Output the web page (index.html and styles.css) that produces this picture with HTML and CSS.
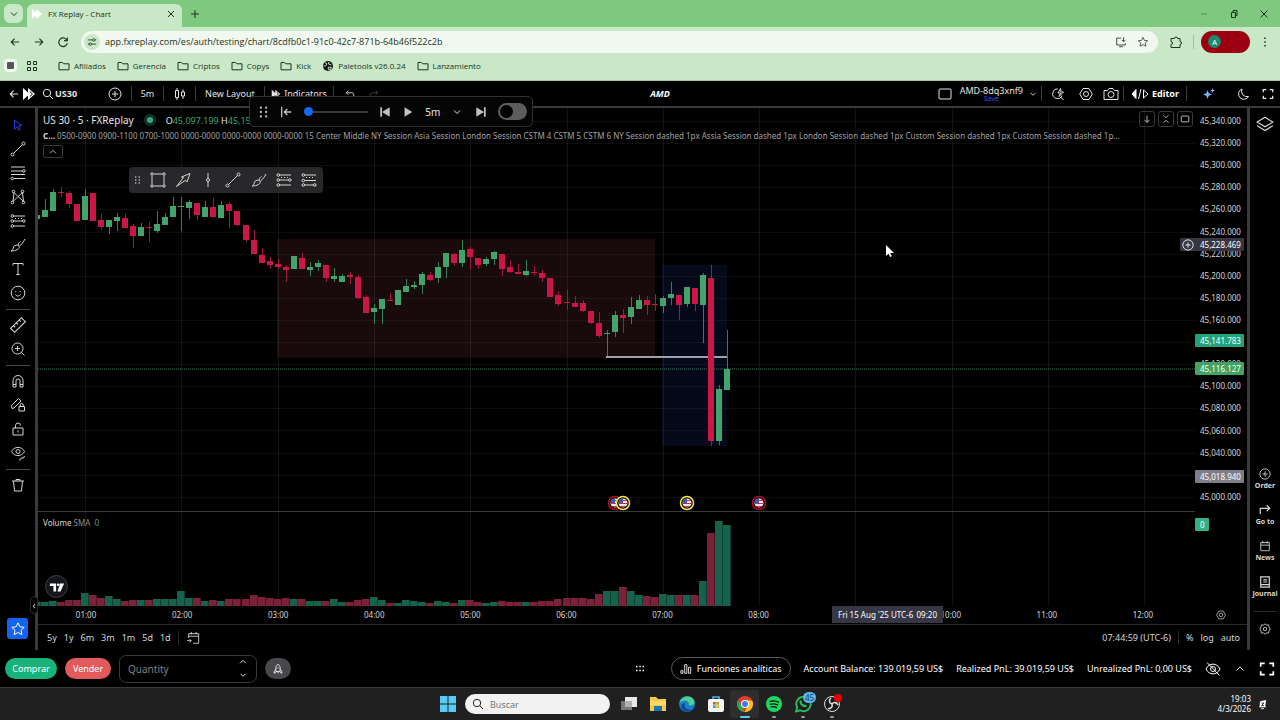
FILE: index.html
```html
<!DOCTYPE html>
<html lang="es">
  <head>
    <meta charset="UTF-8" />
    <meta name="viewport" content="width=device-width, initial-scale=1.0" />
    <title>FX Replay - Chart</title>
    <link rel="stylesheet" href="styles.css">
  </head>
  <body>
    <!--Icons-->
    <svg class="sprite" aria-hidden="true">
      <symbol id="i-down" viewBox="0 0 12 12"><path d="M3 4.500l3 3 3-3" /></symbol>
      <symbol id="i-up" viewBox="0 0 12 12"><path d="M2.500 7.500l3.500-3.500 3.500 3.500" /></symbol>
      <symbol id="i-x" viewBox="0 0 12 12"><path d="M3 3l6 6M9 3l-6 6" /></symbol>
      <symbol id="i-plus" viewBox="0 0 12 12"><path d="M6 2v8M2 6h8" /></symbol>
      <symbol id="i-back" viewBox="0 0 12 12"><path d="M11 6H1.500M5.500 2l-4 4 4 4" stroke-width="1.300" /></symbol>
      <symbol id="i-fwd" viewBox="0 0 12 12"><path d="M1 6h9.500M6.500 2l4 4-4 4" stroke-width="1.300" /></symbol>
      <symbol id="i-reload" viewBox="0 0 12 12"><path d="M10 4.500A4.300 4.300 0 1 0 10.300 7M10.300 1.500v3.200H7" stroke-width="1.200" /></symbol>
      <symbol id="i-tune" viewBox="0 0 12 12"><path d="M1 3.500h5M9.500 3.500h1.500M1 8.500h1.500M6 8.500h5" /><circle cx="8" cy="3.500" r="1.500" /><circle cx="4" cy="8.500" r="1.500" /></symbol>
      <symbol id="i-folder" viewBox="0 0 12 12"><path d="M1 2.500h3.500l1.200 1.300H11v6H1z" /></symbol>
      <symbol id="i-apps" viewBox="0 0 12 12"><path d="M1.500 1.500h3v3h-3zM7.500 1.500h3v3h-3zM1.500 7.500h3v3h-3zM7.500 7.500h3v3h-3z" /></symbol>
      <symbol id="i-globe" viewBox="0 0 12 12"><circle cx="6" cy="6" r="5" fill="#111" stroke="none" /><path d="M3 2.500l2 1.500-1.500 2L1.500 6M7 2l-.5 2 3 1M6.500 7l3 .5-1.500 2.500-2-1z" stroke="#c8e8c8" /></symbol>
      <symbol id="i-install" viewBox="0 0 14 14"><path d="M7 2.500H2v8h10V8.500M5 12.500h4M10 1.500v5M7.800 4.500l2.200 2.200 2.200-2.200" /></symbol>
      <symbol id="i-star" viewBox="0 0 16 16"><path d="M8 1.800l1.900 4 4.300.5-3.200 3 .9 4.300L8 11.500l-3.900 2.100.9-4.300-3.200-3 4.300-.5z" /></symbol>
      <symbol id="i-puzzle" viewBox="0 0 14 14"><path d="M2 3.500h3.500a1.500 1.500 0 0 1 3 0H11V6.500a1.500 1.500 0 0 1 0 3V12.500H2V9.500a1.500 1.500 0 0 0 0-3z" /></symbol>
      <symbol id="i-fxr" viewBox="0 0 14 14"><path d="M1 1l5 4.500V1l7 6-7 6V8.500L1 13z" fill="currentColor" stroke="none" /><path d="M7.800 4.500L10.500 7 7.800 9.500" stroke="#000" /></symbol>
      <symbol id="i-search" viewBox="0 0 12 12"><circle cx="5" cy="5" r="3.700" /><path d="M7.800 7.800L11 11" /></symbol>
      <symbol id="i-circleplus" viewBox="0 0 14 14"><circle cx="7" cy="7" r="6" /><path d="M7 4v6M4 7h6" /></symbol>
      <symbol id="i-candles" viewBox="0 0 14 14"><path d="M2.500 3.500h3v7h-3zM4 1v2.500M4 10.500V13M8.500 5h3v4h-3zM10 2.500V5M10 9v3" /></symbol>
      <symbol id="i-undo" viewBox="0 0 12 12"><path d="M4 2L1.500 4.500 4 7M1.500 4.500H8a2.500 2.500 0 0 1 2.500 2.500v2" /></symbol>
      <symbol id="i-redo" viewBox="0 0 12 12"><path d="M8 2l2.500 2.500L8 7M10.500 4.500H4A2.500 2.500 0 0 0 1.500 7v2" /></symbol>
      <symbol id="i-box" viewBox="0 0 14 14"><rect x="1" y="2" width="12" height="10" rx="1" /></symbol>
      <symbol id="i-quick" viewBox="0 0 14 14"><path d="M7 2A4.800 4.800 0 1 0 11 8.500M9.500 10l3 3M9.500 1.500L7 6h2.500L8 9.500 12.500 5H10z" /></symbol>
      <symbol id="i-hex" viewBox="0 0 14 14"><path d="M4 1.500h6L13.300 7 10 12.500H4L.7 7z" /><circle cx="7" cy="7" r="2.500" /></symbol>
      <symbol id="i-camera" viewBox="0 0 16 14"><path d="M1 3.500h3.500L6 1.500h4l1.500 2H15v9H1z" /><circle cx="8" cy="7.500" r="3" /></symbol>
      <symbol id="i-code" viewBox="0 0 18 12"><path d="M5 1.500L1 6l4 4.500z" fill="currentColor" /><path d="M10 1L7.500 11M12.500 2L17 6l-4.500 4z" /></symbol>
      <symbol id="i-spark" viewBox="0 0 14 14"><path d="M5.500 3l1.200 3.300L10 7.500 6.700 8.700 5.500 12 4.300 8.700 1 7.500l3.300-1.200zM10.500 1l.7 1.800 1.800.7-1.800.7-.7 1.800-.7-1.800L8 3.500l1.800-.7z" fill="#7fb0ff" stroke="none" /></symbol>
      <symbol id="i-moon" viewBox="0 0 14 14"><path d="M6 2a5.300 5.300 0 1 0 6.500 7.500A5.500 5.500 0 0 1 6 2z" /></symbol>
      <symbol id="i-full" viewBox="0 0 14 14"><path d="M1.500 5V2H5M9 2h3.500v3M12.500 9v3H9M5 12H1.500V9" stroke-width="1.500" /></symbol>
      <symbol id="i-cursor" viewBox="0 0 16 16"><path d="M4 2.500l8.500 6-4 .7 2 3.800-1.800 1-2-3.800L4 12.500z" /></symbol>
      <symbol id="i-line" viewBox="0 0 16 16"><path d="M3.500 12.500l9-9" /><circle cx="2.500" cy="13.500" r="1.500" /><circle cx="13.500" cy="2.500" r="1.500" /></symbol>
      <symbol id="i-fib" viewBox="0 0 16 16"><path d="M1 2h14M1 6h11M1 9.500h14M4 13.500h11" /><circle cx="13.800" cy="6" r="1.300" /><circle cx="2.200" cy="13.500" r="1.300" /></symbol>
      <symbol id="i-pattern" viewBox="0 0 16 16"><path d="M3 12.500L4 3.500l4 4 4.500-4 1 9L8 7.500z" /><circle cx="2.500" cy="13.500" r="1.300" /><circle cx="3.500" cy="2.500" r="1.300" /><circle cx="12.500" cy="2.500" r="1.300" /><circle cx="13.500" cy="13.500" r="1.300" /></symbol>
      <symbol id="i-long" viewBox="0 0 16 16"><path d="M3.500 3H15M3.500 8h9M3.500 13H15M5 5.500h1M8 5.500h1M11 5.500h1" /><circle cx="2.300" cy="3" r="1.300" /><circle cx="2.300" cy="8" r="1.300" /><circle cx="13.800" cy="8" r="1.300" /><circle cx="2.300" cy="13" r="1.300" /></symbol>
      <symbol id="i-short" viewBox="0 0 16 16"><path d="M3.500 3H15M3.500 8.500H15M3.500 13h9M5 5.500h1M8 5.500h1M11 5.500h1" /><circle cx="2.300" cy="3" r="1.300" /><circle cx="2.300" cy="8.500" r="1.300" /><circle cx="13.800" cy="13" r="1.300" /><circle cx="2.300" cy="13" r="1.300" /></symbol>
      <symbol id="i-brush" viewBox="0 0 16 16"><path d="M1 14c2-1 2-2 2.500-4C4 8 8 7.500 9 9c1.500 2-2 5-8 5zM9.500 9c2-1.500 4-4 5.500-7M8 8C8.500 6 9.500 5 10.500 4.500" /></symbol>
      <symbol id="i-text" viewBox="0 0 16 16"><path d="M3 4.500V2.500h10v2M8 2.500v11M6.300 13.500h3.400" /></symbol>
      <symbol id="i-smile" viewBox="0 0 16 16"><circle cx="8" cy="8" r="6.800" /><path d="M5.500 9.500c1 2 4 2 5 0M5.800 6v1M10.200 6v1" /></symbol>
      <symbol id="i-ruler" viewBox="0 0 16 16"><path d="M1.500 11L11 1.500 14.500 5 5 14.500zM4 8.500l1.500 1.500M6.500 6L8 7.500M9 3.500L10.500 5" /></symbol>
      <symbol id="i-zoom" viewBox="0 0 16 16"><circle cx="7.500" cy="7.500" r="5.500" /><path d="M11.500 11.500L14.500 14.500M7.500 5v5M5 7.500h5" /></symbol>
      <symbol id="i-magnet" viewBox="0 0 16 16"><path d="M3 14V7.500a5 5 0 0 1 10 0V14h-3V8a2 2 0 0 0-4 0v6zM3 11.500h3M10 11.500h3" /></symbol>
      <symbol id="i-penlock" viewBox="0 0 16 16"><path d="M2 11.500L1.500 8.500 8.500 1.500l2.500 2.500-7 7zM9 9.500h5.500V14H9zM10.200 9.500V8a1.500 1.500 0 0 1 3 0v1.500" /></symbol>
      <symbol id="i-lock" viewBox="0 0 16 16"><path d="M3 7h10v7H3zM5.500 7V4.500a2.500 2.500 0 0 1 5 0M8 9.500v2" /></symbol>
      <symbol id="i-eye" viewBox="0 0 16 16"><path d="M1.500 6.500c3-5.500 10-5.500 13 0-3 5.500-10 5.500-13 0zM9 15c2 0 2-1 2-2h2.500l1-2" /><circle cx="8" cy="6.500" r="2" /></symbol>
      <symbol id="i-trash" viewBox="0 0 16 16"><path d="M2 4h12M3.500 4l1 10h7l1-10M6 4V2.500h4V4" /></symbol>
      <symbol id="i-layers" viewBox="0 0 16 16"><path d="M8 2l7 4.300L8 10.500 1 6.300zM1 9.500l7 4.300 7-4.300" /></symbol>
      <symbol id="i-goto" viewBox="0 0 14 14"><path d="M1.500 12V5H12M9 1.500L12.500 5 9 8.500" stroke-width="1.400" /></symbol>
      <symbol id="i-cal" viewBox="0 0 14 14"><path d="M2 3h10v9.500H2zM2 6h10M4.500 1v3M9.500 1v3" /></symbol>
      <symbol id="i-journal" viewBox="0 0 14 14"><path d="M2 1h10v12H2zM2 10h10M5 4.500h4.500M5 7h4.500" stroke-width="1.400" /></symbol>
      <symbol id="i-gear" viewBox="0 0 14 14"><path d="M7 1l1.700 1.400 2.500-.2.500 2.400L13 7l-1.300 2.400-.5 2.400-2.500-.2L7 13l-1.700-1.400-2.500.2-.5-2.400L1 7l1.300-2.400.5-2.400 2.500.2z" /><circle cx="7" cy="7" r="2" /></symbol>
      <symbol id="i-rect" viewBox="0 0 16 16"><path d="M3.500 2h9M3.500 14h9M2 3.500v9M14 3.500v9" /><circle cx="2" cy="2" r="1.200" /><circle cx="14" cy="2" r="1.200" /><circle cx="2" cy="14" r="1.200" /><circle cx="14" cy="14" r="1.200" /></symbol>
      <symbol id="i-arrow" viewBox="0 0 16 16"><path d="M1.500 14.500l7-9-2-.5 8.500-3.500-3 8.500-1.500-1.800z" /></symbol>
      <symbol id="i-vline" viewBox="0 0 16 16"><path d="M8 1v5.500M8 9.500V15" /><circle cx="8" cy="8" r="1.500" /></symbol>
      <symbol id="i-dots6" viewBox="0 0 12 16"><g fill="currentColor" stroke="none"><circle cx="3" cy="3" r="1.300" /><circle cx="9" cy="3" r="1.300" /><circle cx="3" cy="8" r="1.300" /><circle cx="9" cy="8" r="1.300" /><circle cx="3" cy="13" r="1.300" /><circle cx="9" cy="13" r="1.300" /></g></symbol>
      <symbol id="i-start" viewBox="0 0 14 14"><path d="M2 1v12M13 7H5M8.500 3.500L5 7l3.500 3.500" stroke-width="1.500" /></symbol>
      <symbol id="i-prev" viewBox="0 0 14 14"><path d="M1.500 1.500h2v11h-2zM12.500 1.500v11L3.500 7z" fill="currentColor" stroke="none" /></symbol>
      <symbol id="i-next" viewBox="0 0 14 14"><path d="M10.500 1.500h2v11h-2zM1.500 1.500v11l9-5.500z" fill="currentColor" stroke="none" /></symbol>
      <symbol id="i-play" viewBox="0 0 14 14"><path d="M3 1.500v11L12 7z" fill="currentColor" stroke="none" /></symbol>
      <symbol id="i-arrdown" viewBox="0 0 12 12"><path d="M6 2v8M3 7l3 3 3-3" /></symbol>
      <symbol id="i-collapse" viewBox="0 0 12 12"><path d="M3 1.500L6 4.500l3-3M3 10.500l3-3 3 3" /></symbol>
      <symbol id="i-goto-date" viewBox="0 0 16 16"><path d="M3 8V3h11.500v11H8M3 6h11.500M6 1v3M11.500 1v3M1 11h5M4 9l2 2-2 2" /></symbol>
      <symbol id="i-rocket" viewBox="0 0 14 14"><path d="M4.500 10V5.500C4.500 3.500 6 2 7 1.500c1 .5 2.500 2 2.500 4V10zM4.500 7.500L2.500 10v2l2-1M9.500 7.500l2 2.500v2l-2-1M7 5v1.500M7 10v2" /></symbol>
      <symbol id="i-bars" viewBox="0 0 14 14"><path d="M1 9h2.500v3H1zM5.500 2H8v10H5.500zM10 5h2.500v7H10z" /></symbol>
      <symbol id="i-eyeoff" viewBox="0 0 16 16"><path d="M1 8c3-6.500 11-6.500 14 0-3 6.500-11 6.500-14 0zM2 1.500L14.500 14.500" /><circle cx="8" cy="8" r="2.500" /></symbol>
    </svg>

    <!--Browser-->
    <header class="browser">
      <div class="tab-strip">
        <button class="tab-search" aria-label="Buscar pestañas"><svg class="ic s12"><use href="#i-down" /></svg></button>
        <div class="tab">
          <svg class="ic s12 tab-logo" viewBox="0 0 14 14"><path d="M1 1l5 4.500V1l7 6-7 6V8.500L1 13z" fill="#fff" stroke="none" /></svg>
          <span class="tab-title">FX Replay - Chart</span>
          <button class="plain" aria-label="Cerrar"><svg class="ic s12"><use href="#i-x" /></svg></button>
        </div>
        <button class="plain new-tab" aria-label="Nueva pestaña"><svg class="ic s12"><use href="#i-plus" /></svg></button>
        <div class="window-controls">
          <button class="plain dim" aria-label="Minimizar"><svg class="ic s12" viewBox="0 0 12 12"><path d="M3 6h6" /></svg></button>
          <button class="plain" aria-label="Restaurar"><svg class="ic s12" viewBox="0 0 12 12"><path d="M3.500 4.500h4v5h-4zM5 4.500v-2h4v5H7.500" /></svg></button>
          <button class="plain" aria-label="Salir"><svg class="ic s12" viewBox="0 0 12 12"><path d="M2.500 2.500l7 7M9.500 2.500l-7 7" /></svg></button>
        </div>
      </div>
      <div class="nav-bar">
        <button class="plain nav-btn" aria-label="Atrás"><svg class="ic s10"><use href="#i-back" /></svg></button>
        <button class="plain nav-btn" aria-label="Adelante"><svg class="ic s10"><use href="#i-fwd" /></svg></button>
        <button class="plain nav-btn" aria-label="Recargar"><svg class="ic s12"><use href="#i-reload" /></svg></button>
        <div class="omnibox">
          <span class="site-info"><svg class="ic s10"><use href="#i-tune" /></svg></span>
          <input class="url" aria-label="Dirección" value="app.fxreplay.com/es/auth/testing/chart/8cdfb0c1-91c0-42c7-871b-64b46f522c2b" />
          <svg class="ic s12"><use href="#i-install" /></svg>
          <svg class="ic s12"><use href="#i-star" /></svg>
        </div>
        <button class="plain ext" aria-label="Extensiones"><svg class="ic s14"><use href="#i-puzzle" /></svg></button>
        <button class="profile" aria-label="Perfil"><span class="avatar">A</span></button>
        <button class="plain kebab" aria-label="Menú"><svg class="ic s12" viewBox="0 0 12 12"><path d="M6 1.500v1.500M6 5.300v1.500M6 9v1.500" stroke-width="1.500" /></svg></button>
      </div>
      <nav class="bookmarks">
        <span class="bm-square"></span>
        <svg class="ic s12 bm-apps"><use href="#i-apps" /></svg>
        <a href="#"><svg class="ic s12"><use href="#i-folder" /></svg>Afiliados</a>
        <a href="#"><svg class="ic s12"><use href="#i-folder" /></svg>Gerencia</a>
        <a href="#"><svg class="ic s12"><use href="#i-folder" /></svg>Criptos</a>
        <a href="#"><svg class="ic s12"><use href="#i-folder" /></svg>Copys</a>
        <a href="#"><svg class="ic s12"><use href="#i-folder" /></svg>Kick</a>
        <a href="#"><svg class="ic s12"><use href="#i-globe" /></svg>Paletools v26.0.24</a>
        <a href="#"><svg class="ic s12"><use href="#i-folder" /></svg>Lanzamiento</a>
      </nav>
    </header>

    <!--Top toolbar-->
    <div class="top-bar">
      <div class="top-left">
        <button class="tb back" aria-label="Volver"><svg class="ic s10"><use href="#i-back" /></svg></button>
        <svg class="ic s14 logo"><use href="#i-fxr" /></svg>
        <button class="tb symbol"><svg class="ic s12"><use href="#i-search" /></svg><b>US30</b></button>
        <button class="tb w32" aria-label="Comparar"><svg class="ic s14"><use href="#i-circleplus" /></svg></button>
        <button class="tb w32 sep">5m</button>
        <button class="tb w32 sep" aria-label="Velas"><svg class="ic s14"><use href="#i-candles" /></svg></button>
        <button class="tb layout sep">New Layout</button>
        <button class="tb indicators sep"><svg class="ic s10"><use href="#i-fxr" /></svg>Indicators</button>
        <button class="tb w32 sep" aria-label="Deshacer"><svg class="ic s10"><use href="#i-undo" /></svg></button>
        <button class="tb off" aria-label="Rehacer"><svg class="ic s10"><use href="#i-redo" /></svg></button>
      </div>
      <div class="session-name">AMD</div>
      <div class="top-right">
        <svg class="ic s14"><use href="#i-box" /></svg>
        <button class="tb saved"><span>AMD-8dq3xnf9</span><small>Save</small></button>
        <svg class="ic s10"><use href="#i-down" /></svg>
        <button class="tb w26 sep first" aria-label="Búsqueda"><svg class="ic s14"><use href="#i-quick" /></svg></button>
        <button class="tb w26" aria-label="Ajustes"><svg class="ic s14"><use href="#i-hex" /></svg></button>
        <button class="tb w26" aria-label="Captura"><svg class="ic s16"><use href="#i-camera" /></svg></button>
        <button class="tb editor sep"><svg class="ic s18"><use href="#i-code" /></svg><b>Editor</b></button>
        <button class="tb spark sep" aria-label="IA"><svg class="ic s14"><use href="#i-spark" /></svg></button>
        <button class="tb w26" aria-label="Tema"><svg class="ic s14"><use href="#i-moon" /></svg></button>
        <button class="tb w26" aria-label="Pantalla completa"><svg class="ic s12"><use href="#i-full" /></svg></button>
      </div>
    </div>

    <main class="workspace">
      <aside class="draw-bar">
        <button class="tool active" aria-label="Cursor"><svg class="ic s14"><use href="#i-cursor" /></svg></button>
        <button class="tool" aria-label="Línea"><svg class="ic s16"><use href="#i-line" /></svg></button>
        <button class="tool" aria-label="Fibonacci"><svg class="ic s16"><use href="#i-fib" /></svg></button>
        <button class="tool" aria-label="Patrones"><svg class="ic s16"><use href="#i-pattern" /></svg></button>
        <button class="tool" aria-label="Posición"><svg class="ic s16"><use href="#i-long" /></svg></button>
        <button class="tool" aria-label="Pincel"><svg class="ic s16"><use href="#i-brush" /></svg></button>
        <button class="tool" aria-label="Texto"><svg class="ic s16"><use href="#i-text" /></svg></button>
        <button class="tool" aria-label="Iconos"><svg class="ic s16"><use href="#i-smile" /></svg></button>
        <hr />
        <button class="tool" aria-label="Medir"><svg class="ic s18"><use href="#i-ruler" /></svg></button>
        <button class="tool" aria-label="Zoom"><svg class="ic s16"><use href="#i-zoom" /></svg></button>
        <hr />
        <button class="tool" aria-label="Imán"><svg class="ic s16"><use href="#i-magnet" /></svg></button>
        <button class="tool" aria-label="Modo dibujo"><svg class="ic s16"><use href="#i-penlock" /></svg></button>
        <button class="tool" aria-label="Bloquear"><svg class="ic s16"><use href="#i-lock" /></svg></button>
        <button class="tool" aria-label="Ocultar"><svg class="ic s16"><use href="#i-eye" /></svg></button>
        <hr />
        <button class="tool" aria-label="Eliminar"><svg class="ic s16"><use href="#i-trash" /></svg></button>
        <button class="tool favorite" aria-label="Favoritos"><svg class="ic s16"><use href="#i-star" /></svg></button>
      </aside>

      <section class="chart">
        <div class="plot-row">
          <div class="plot">
            <svg class="candles" id="candles" role="img" aria-label="US 30"></svg>
            <div class="legend">
              <div class="legend-title"><span>US 30 · 5 · FXReplay</span><i class="status"></i><span class="ohlc">O<em>45,097.199</em> H<em>45,15</em></span></div>
              <div class="legend-study"><b>C…</b> 0500-0900 0900-1100 0700-1000 0000-0000 0000-0000 0000-0000 15 Center Middle NY Session Asia Session London Session CSTM 4 CSTM 5 CSTM 6 NY Session dashed 1px Assia Session dashed 1px London Session dashed 1px Custom Session dashed 1px Custom Session dashed 1p...</div>
              <button class="legend-toggle" aria-label="Contraer"><svg class="ic s10"><use href="#i-up" /></svg></button>
            </div>
            <div class="pane-buttons">
              <button aria-label="Bajar panel"><svg class="ic s10"><use href="#i-arrdown" /></svg></button>
              <button aria-label="Contraer panel"><svg class="ic s10"><use href="#i-collapse" /></svg></button>
              <button aria-label="Maximizar panel"><svg class="ic s10" viewBox="0 0 12 12"><rect x="1.500" y="2.500" width="9" height="7" rx="1" /></svg></button>
            </div>
            <div class="volume-legend">Volume <span>SMA</span> <em>0</em></div>
            <div class="tv-logo"><svg class="ic s16" viewBox="0 0 18 14"><path d="M1 3h7v9H5V6H1zM12.500 3H17l-4 9H9.500z" fill="#fff" stroke="none" /><circle cx="10.300" cy="4.500" r="1.500" fill="#fff" stroke="none" /></svg></div>
          </div>
          <div class="price-axis">
            <div class="prices">
              <span>45,340.000</span><span>45,320.000</span><span>45,300.000</span><span>45,280.000</span><span>45,260.000</span><span>45,240.000</span><span>45,220.000</span><span>45,200.000</span><span>45,180.000</span><span>45,160.000</span><span>&nbsp;</span><span>45,120.000</span><span>45,100.000</span><span>45,080.000</span><span>45,060.000</span><span>45,040.000</span><span>&nbsp;</span><span>45,000.000</span>
            </div>
            <div class="tag cross"><svg class="ic s12"><use href="#i-circleplus" /></svg>45,228.469</div>
            <div class="tag bid">45,141.783</div>
            <div class="tag last">45,116.127</div>
            <div class="tag low">45,018.940</div>
            <div class="tag vol">0</div>
          </div>
        </div>
        <div class="time-axis">
          <div class="hours">
            <span>01:00</span><span>02:00</span><span>03:00</span><span>04:00</span><span>05:00</span><span>06:00</span><span>07:00</span><span>08:00</span><span></span><span>10:00</span><span>11:00</span><span>12:00</span>
          </div>
          <div class="axis-settings"><svg class="ic s10"><use href="#i-hex" /></svg></div>
          <div class="time-tag"><span>Fri 15 Aug '25 UTC-6</span><span>09:20</span></div>
        </div>
        <div class="range-bar">
          <button>5y</button><button>1y</button><button>6m</button><button>3m</button><button>1m</button><button>5d</button><button>1d</button>
          <button class="go-date" aria-label="Ir a"><svg class="ic s14"><use href="#i-goto-date" /></svg></button>
          <button class="clock">07:44:59 (UTC-6)</button>
          <button class="pct">%</button><button>log</button><button>auto</button>
        </div>

        <div class="fav-bar">
          <svg class="ic fav-grip"><use href="#i-dots6" /></svg>
          <button aria-label="Rectángulo"><svg class="ic s16"><use href="#i-rect" /></svg></button>
          <button aria-label="Flecha"><svg class="ic s16"><use href="#i-arrow" /></svg></button>
          <button aria-label="Línea vertical"><svg class="ic s16"><use href="#i-vline" /></svg></button>
          <button aria-label="Tendencia"><svg class="ic s16"><use href="#i-line" /></svg></button>
          <button aria-label="Pincel"><svg class="ic s16"><use href="#i-brush" /></svg></button>
          <button aria-label="Posición larga"><svg class="ic s16"><use href="#i-long" /></svg></button>
          <button aria-label="Posición corta"><svg class="ic s16"><use href="#i-short" /></svg></button>
        </div>

        <div class="replay">
          <svg class="ic grip"><use href="#i-dots6" /></svg>
          <button aria-label="Inicio"><svg class="ic s12"><use href="#i-start" /></svg></button>
          <input type="range" class="speed" min="0" max="100" value="0" aria-label="Velocidad" />
          <button aria-label="Anterior"><svg class="ic s12"><use href="#i-prev" /></svg></button>
          <button class="play" aria-label="Reproducir"><svg class="ic s12"><use href="#i-play" /></svg></button>
          <button class="step">5m<svg class="ic s12"><use href="#i-down" /></svg></button>
          <button aria-label="Siguiente"><svg class="ic s12"><use href="#i-next" /></svg></button>
          <input type="checkbox" class="switch" aria-label="Automático" />
        </div>

        <button class="side-handle" aria-label="Ocultar barra">‹</button>
        <svg class="pointer" viewBox="0 0 10 14"><path d="M1 1v11l2.500-2.300L5.200 13l1.600-.8L5.200 9H9z" fill="#fff" /></svg>
      </section>

      <aside class="side-bar">
        <button class="side layers" aria-label="Capas"><svg class="ic s18"><use href="#i-layers" /></svg></button>
        <button class="side"><svg class="ic s12"><use href="#i-circleplus" /></svg>Order</button>
        <button class="side"><svg class="ic s12"><use href="#i-goto" /></svg>Go to</button>
        <button class="side"><svg class="ic s12"><use href="#i-cal" /></svg>News</button>
        <button class="side"><svg class="ic s12"><use href="#i-journal" /></svg>Journal</button>
        <button class="side settings" aria-label="Configuración"><svg class="ic s12"><use href="#i-gear" /></svg></button>
      </aside>
    </main>

    <!--Order bar-->
    <div class="order-bar">
      <button class="buy">Comprar</button>
      <button class="sell">Vender</button>
      <div class="quantity">
        <input type="text" placeholder="Quantity" aria-label="Quantity" />
        <div class="stepper">
          <svg class="ic s10"><use href="#i-up" /></svg>
          <svg class="ic s10"><use href="#i-down" /></svg>
        </div>
      </div>
      <button class="rocket" aria-label="Rápido"><svg class="ic s12"><use href="#i-rocket" /></svg></button>
      <svg class="ic drag" viewBox="0 0 10 8"><path d="M1 1.500h1.500M4.300 1.500h1.500M7.500 1.500H9M1 5.500h1.500M4.300 5.500h1.500M7.500 5.500H9" stroke-width="1.500" /></svg>
      <div class="account">
        <button class="analytics"><svg class="ic s12"><use href="#i-bars" /></svg>Funciones analíticas</button>
        <span>Account Balance: 139.019,59 US$</span>
        <span>Realized PnL: 39.019,59 US$</span>
        <span>Unrealized PnL: 0,00 US$</span>
        <svg class="ic s16"><use href="#i-eyeoff" /></svg>
        <svg class="ic s12"><use href="#i-up" /></svg>
        <svg class="ic s16"><use href="#i-full" /></svg>
      </div>
    </div>

    <!--Taskbar-->
    <footer class="taskbar">
      <div class="dock">
        <svg class="start" viewBox="0 0 16 16"><path d="M0 0h7.500v7.500H0zM8.500 0H16v7.500H8.500zM0 8.500h7.500V16H0zM8.500 8.500H16V16H8.500z" fill="#58c8f5" /></svg>
        <label class="task-search"><svg class="ic s12"><use href="#i-search" /></svg><input type="text" placeholder="Buscar" /></label>
        <div class="app"><svg viewBox="0 0 18 18"><rect x="1" y="6" width="11" height="9" fill="#777" /><rect x="5" y="2" width="12" height="10" fill="#e8e8e8" /><rect x="5" y="6" width="7" height="6" fill="#b0b0b0" /></svg></div>
        <div class="app"><svg viewBox="0 0 18 18"><path d="M1 2h6l2 2h8v12H1z" fill="#f7c948" /><path d="M5 11h8v5H5z" fill="#1877b8" /><path d="M1 6h16v4H1z" fill="#ffd867" /></svg></div>
        <div class="app"><svg viewBox="0 0 18 18"><circle cx="9" cy="9" r="8" fill="#1681c9" /><path d="M1.500 8C3 2 9 0 13.500 2.500 17.500 5 17.500 10 13 10.500c-3 0-2-2-2.500-3C8.500 4.500 4 5 1.500 8z" fill="#4fd08c" /><path d="M7 8c-2 5 3 8 8 6-3 4-9 3-11 0S4 8.500 7 8z" fill="#0c4a94" /></svg></div>
        <div class="app"><svg viewBox="0 0 18 18"><path d="M6 4V2h6v2" fill="none" stroke="#49b3ee" stroke-width="1.500" /><rect x="1" y="4" width="16" height="13" rx="2" fill="#f4f4f4" /><path d="M6 7h2.700v2.700H6z" fill="#e5492f" /><path d="M9.300 7H12v2.700H9.300z" fill="#7ab83a" /><path d="M6 10.300h2.700V13H6z" fill="#2f9fe0" /><path d="M9.300 10.300H12V13H9.300z" fill="#f4b400" /></svg></div>
        <div class="app current"><svg viewBox="0 0 18 18"><circle cx="9" cy="9" r="8" fill="#e33b2e" /><path d="M2 5l5 8.500L8.500 17A8 8 0 0 1 2 5z" fill="#2da44e" /><path d="M9 5.500h7.200A8 8 0 0 1 8.500 17L12 11z" fill="#fbc116" /><circle cx="9" cy="9" r="4" fill="#fff" /><circle cx="9" cy="9" r="3" fill="#3b7de8" /></svg></div>
        <div class="app open"><svg viewBox="0 0 18 18"><circle cx="9" cy="9" r="8" fill="#1ed760" /><path d="M4.500 6.500c3-1 6.500-.7 9.500.9M5 9.300c2.700-.8 5.500-.5 8 .9M5.500 12c2-.6 4.500-.4 6.500.7" fill="none" stroke="#111" stroke-width="1.300" /></svg></div>
        <div class="app open"><svg viewBox="0 0 18 18"><path d="M2 16.500l1.200-4A7.200 7.200 0 1 1 6 15.300z" fill="none" stroke="#25c35b" stroke-width="1.800" /><path d="M6 5.500c1-1 1.500.3 2 1.500-.8 1-.3 1.500 2.500 3 1-.8 3 .3 2 1.500C9 14 4 8 6 5.500z" fill="#25c35b" /></svg><span class="badge">45</span></div>
        <div class="app open"><svg viewBox="0 0 18 18"><circle cx="9" cy="9" r="7.500" fill="#1b1b1b" stroke="#ddd" /><path d="M9 9c-3-1-3.500-4-1-6M9 9c2-2.500 5-1.500 6 1M9 9c1 3-1 5-4 4.500" fill="none" stroke="#ddd" stroke-width="1.600" /></svg><span class="rec"></span></div>
      </div>
      <div class="tray">
        <div class="date">19:03<br />4/3/2026</div>
        <svg class="bell" viewBox="0 0 12 12"><path d="M2 9l1-1.500V4.500A2.500 2.500 0 0 1 6 2l4-1-1 6.500L10 9z" fill="#fff" /><path d="M5 4.500h2.500L5 7h2.500" stroke="#202020" fill="none" /><path d="M4.500 10.500h3" stroke="#fff" /></svg>
      </div>
    </footer>

    <script src="chart.js"></script>
  </body>
</html>
```

FILE: styles.css
```css
* {
  box-sizing: border-box;
}
body {
  margin: 0;
  min-height: 100vh;
  display: flex;
  flex-direction: column;
  background: #000;
  color: #d6d6d6;
  font-family: "Noto Sans", "Open Sans", sans-serif;
  font-size: 10px;
  overflow-x: hidden;
}
button,
input {
  font: inherit;
  color: inherit;
  background: none;
  border: none;
  padding: 0;
  margin: 0;
  outline: none;
}
button {
  display: flex;
  align-items: center;
  justify-content: center;
  flex: none;
  white-space: nowrap;
}
em {
  font-style: normal;
}
.sprite {
  position: absolute;
  width: 0;
  height: 0;
}
.ic {
  flex: none;
  display: block;
  fill: none;
  stroke: currentColor;
  stroke-width: 1;
}
.s10 { width: 10px; height: 10px; }
.s12 { width: 12px; height: 12px; }
.s14 { width: 14px; height: 14px; }
.s16 { width: 16px; height: 16px; }
.s18 { width: 18px; height: 18px; }

/*Browser*/
.browser {
  background: #c8e8c8;
  color: #1d3320;
  font-family: "Open Sans", "Noto Sans", sans-serif;
  font-size: 8px;
}
.tab-strip {
  height: 27px;
  display: flex;
  align-items: center;
  background: #7ec87f;
}
.tab-search {
  width: 19px;
  height: 19px;
  margin-left: 4px;
  border-radius: 6px;
  background: #c8e8c8;
}
.tab {
  align-self: flex-end;
  width: 155px;
  height: 23px;
  margin-left: 4px;
  padding: 0 5px 4px 4px;
  display: flex;
  align-items: center;
  gap: 5px;
  border-radius: 6px 6px 0 0;
  background: #c8e8c8;
}
.tab-title {
  flex: 1;
}
.new-tab {
  margin-left: 7px;
}
.window-controls {
  margin-left: auto;
  padding-right: 10px;
  display: flex;
  gap: 18px;
}
.dim {
  opacity: 0.4;
}
.nav-bar {
  height: 29px;
  padding-left: 3px;
  display: flex;
  align-items: center;
}
.nav-btn {
  width: 24px;
  height: 24px;
}
.omnibox {
  flex: 1;
  height: 22px;
  margin-left: 6px;
  padding: 0 9px 0 3px;
  display: flex;
  align-items: center;
  gap: 10px;
  border-radius: 11px;
  background: #f0f8ef;
}
.site-info {
  width: 16px;
  height: 16px;
  display: flex;
  align-items: center;
  justify-content: center;
  border-radius: 50%;
  background: #c8e8c8;
}
.url {
  flex: 1;
  margin-left: -5px;
  font-size: 9px;
}
.ext {
  padding: 0 10px 0 11px;
  border-right: 1px solid #9ec69e;
}
.profile {
  width: 49px;
  height: 22px;
  margin-left: 7px;
  padding-left: 7px;
  justify-content: flex-start;
  border-radius: 11px;
  background: #9c0010;
}
.avatar {
  width: 13px;
  height: 13px;
  border-radius: 50%;
  background: #198a72;
  color: #fff;
  line-height: 13px;
}
.kebab {
  width: 30px;
}
.bookmarks {
  height: 25px;
  padding: 0 0 5px 4px;
  display: flex;
  align-items: center;
  border-bottom: 1px solid #a5c2a5;
}
.bookmarks a {
  display: flex;
  align-items: center;
  gap: 4px;
  margin-right: 11px;
  color: inherit;
  text-decoration: none;
}
.bm-square {
  width: 13px;
  height: 13px;
  border: 3px solid #f0f8ef;
  border-radius: 4px;
  background: #555;
}
.bm-apps {
  margin: 0 20px 0 9px;
}

/*Top toolbar*/
.top-bar {
  height: 27px;
  display: grid;
  grid-template-columns: 1fr auto 1fr;
  align-items: center;
  border-bottom: 2px solid #3a3a3a;
  color: #e4e4e4;
  font-size: 9px;
}
.top-left,
.top-right {
  display: flex;
  align-items: center;
}
.top-left {
  padding-left: 5px;
}
.top-right {
  justify-content: flex-end;
}
.tb {
  height: 15px;
  gap: 3px;
}
.back {
  width: 17px;
}
.logo {
  color: #fff;
}
.symbol {
  width: 57px;
  gap: 1px;
  justify-content: flex-start;
  margin-left: 6px;
}
.w32 {
  width: 32px;
}
.w26 {
  width: 25px;
}
.sep {
  border-left: 1px solid #3a3a3a;
}
.layout {
  width: 69px;
}
.indicators {
  width: 69px;
}
.off {
  width: 18px;
  opacity: 0.3;
}
.session-name {
  padding-left: 40px;
  color: #fff;
  font-weight: bold;
  font-style: italic;
}
.saved {
  margin: 0 5px 0 8px;
  flex-direction: column;
  gap: 0;
  line-height: 9px;
}
.saved small {
  font-size: 7px;
  line-height: 7px;
  color: #2f4cff;
}
.first {
  margin-left: 3px;
  width: 32px;
}
.editor {
  width: 63px;
  color: #fff;
}
.spark {
  width: 44px;
}

/*Workspace*/
.workspace {
  flex: 1;
  display: flex;
}
.draw-bar {
  width: 35px;
  flex: none;
  padding: 5px 0 11px;
  display: flex;
  flex-direction: column;
  align-items: center;
}
.draw-bar hr {
  width: 24px;
  height: 1px;
  margin: 4px 0 3px;
  border: none;
  background: #4a4a4a;
}
.tool {
  width: 24px;
  height: 24px;
}
.tool.active {
  color: #2f4cff;
}
.favorite {
  width: 21px;
  height: 21px;
  margin-top: auto;
  border-radius: 3px;
  background: #1463f3;
  color: #fff;
}
.chart {
  flex: 1;
  min-width: 0;
  position: relative;
  border-left: 3px solid #3a3a3a;
  border-right: 3px solid #3a3a3a;
}
.plot-row {
  display: flex;
  height: 498px;
}
.plot {
  flex: 1;
  min-width: 0;
  position: relative;
}
.candles {
  position: absolute;
  width: 100%;
  height: 100%;
}
.legend {
  position: relative;
  padding: 5px 60px 0 5px;
}
.legend-title {
  display: flex;
  align-items: center;
  height: 14px;
  color: #e4e4e4;
  white-space: nowrap;
}
.status {
  width: 6px;
  height: 6px;
  margin: 0 13px;
  border-radius: 50%;
  background: #3fa377;
  box-shadow: 0 0 0 3px #0c3526;
}
.ohlc {
  font-size: 9px;
}
.ohlc em {
  color: #3fa377;
}
.legend-study {
  height: 18px;
  line-height: 18px;
  font-size: 8px;
  color: #a0a0a0;
  white-space: nowrap;
  overflow: hidden;
  text-overflow: ellipsis;
}
.legend-study b {
  color: #d6d6d6;
}
.legend-toggle {
  width: 20px;
  height: 13px;
  border: 1px solid #3a3a3a;
  border-radius: 2px;
}
.pane-buttons {
  position: absolute;
  top: 3px;
  right: 2px;
  display: flex;
  gap: 3px;
}
.pane-buttons button {
  width: 16px;
  height: 16px;
  border: 1px solid #3a3a3a;
  border-radius: 3px;
}
.volume-legend {
  position: absolute;
  top: 409px;
  left: 5px;
  font-size: 8px;
}
.volume-legend span {
  color: #909090;
}
.volume-legend em {
  margin-left: 2px;
  color: #3fa377;
}
.tv-logo {
  position: absolute;
  left: 7px;
  bottom: 8px;
  width: 23px;
  height: 23px;
  display: flex;
  align-items: center;
  justify-content: center;
  border: 1px solid #3d3f48;
  border-radius: 50%;
  background: #14161c;
}
.price-axis {
  width: 52px;
  flex: none;
  position: relative;
  font-size: 8px;
}
.prices {
  height: 395px;
  padding-top: 7px;
  padding-left: 5px;
  display: flex;
  flex-direction: column;
  justify-content: space-between;
  line-height: 12px;
}
.tag {
  position: absolute;
  left: 0;
  width: 49px;
  height: 13px;
  padding-left: 5px;
  display: flex;
  align-items: center;
  border-radius: 1px;
  color: #fff;
}
.tag.cross {
  top: 130px;
  left: -15px;
  width: 64px;
  padding-left: 2px;
  gap: 6px;
  background: #363644;
}
.tag.bid {
  top: 226px;
  background: #20a37c;
}
.tag.last {
  top: 254px;
  background: #42a462;
}
.tag.low {
  top: 362px;
  background: #7e7e8a;
}
.tag.vol {
  top: 410px;
  width: 14px;
  background: #35ad85;
}
.time-axis {
  height: 19px;
  display: flex;
  position: relative;
  border-bottom: 1px solid #2a2a2a;
  font-size: 8px;
  line-height: 18px;
}
.hours {
  flex: 1;
  display: flex;
  padding-right: 4px;
  text-align: center;
}
.hours span {
  flex: 1;
}
.axis-settings {
  width: 52px;
  display: flex;
  align-items: center;
  justify-content: center;
}
.time-tag {
  position: absolute;
  left: 794px;
  top: 0;
  width: 111px;
  height: 17px;
  padding: 0 6px;
  display: flex;
  justify-content: space-between;
  background: #363644;
  color: #fff;
}
.range-bar {
  height: 25px;
  padding: 0 7px 0 9px;
  display: flex;
  align-items: center;
  gap: 7px;
  font-size: 9px;
}
.go-date {
  padding-left: 7px;
  border-left: 1px solid #2a2a2a;
}
.clock {
  margin-left: auto;
}
.pct {
  padding-left: 7px;
  border-left: 1px solid #2a2a2a;
}

/*Floating panels*/
.fav-bar {
  position: absolute;
  left: 91px;
  top: 59px;
  width: 194px;
  height: 26px;
  padding: 0 1px 0 5px;
  display: flex;
  align-items: center;
  border-radius: 4px;
  background: #28282b;
}
.fav-bar button {
  flex: 1;
}
.fav-grip {
  width: 7px;
  height: 10px;
  margin-right: 4px;
}
.replay {
  position: absolute;
  left: 211px;
  top: -12px;
  width: 284px;
  height: 31px;
  padding: 0 5px 0 8px;
  display: flex;
  align-items: center;
  justify-content: space-between;
  border: 1px solid #303030;
  border-radius: 5px;
  background: #050505;
  color: #c0c0c0;
}
.grip {
  width: 11px;
  height: 14px;
}
.speed {
  appearance: none;
  width: 64px;
  height: 2px;
  background: #3a3a3a;
}
.speed::-webkit-slider-thumb {
  appearance: none;
  width: 9px;
  height: 9px;
  border-radius: 50%;
  background: #1668ec;
}
.step {
  gap: 11px;
  color: #e4e4e4;
}
.switch {
  appearance: none;
  width: 29px;
  height: 17px;
  padding: 2px;
  border-radius: 9px;
  background: #5d5d60;
}
.switch::before {
  content: "";
  display: block;
  width: 13px;
  height: 13px;
  border-radius: 50%;
  background: #000;
}
.side-handle {
  position: absolute;
  left: -8px;
  top: 488px;
  width: 8px;
  height: 18px;
  border: 1px solid #2a2a2a;
  border-radius: 4px;
  background: #000;
}
.pointer {
  position: absolute;
  left: 847px;
  top: 136px;
  width: 10px;
  height: 14px;
}

/*Right side bar*/
.side-bar {
  width: 30px;
  flex: none;
  display: flex;
  flex-direction: column;
}
.side {
  height: 36px;
  padding-bottom: 12px;
  flex-direction: column;
  gap: 1px;
  font-size: 7px;
  font-weight: bold;
  line-height: 9px;
}
.layers {
  height: 32px;
  padding-bottom: 0;
  margin-bottom: auto;
}
.settings {
  height: 39px;
  margin: 0 4px;
  padding-bottom: 4px;
  border-top: 1px solid #2a2a2a;
}

/*Order bar*/
.order-bar {
  height: 38px;
  padding: 0 5px;
  display: flex;
  align-items: center;
  border-bottom: 1px solid #3a3a3a;
  color: #fff;
  font-size: 9px;
}
.buy,
.sell {
  height: 21px;
  margin-right: 8px;
  border-radius: 11px;
}
.buy {
  width: 52px;
  background: #19b27b;
}
.sell {
  width: 46px;
  background: #e15a5c;
}
.quantity {
  width: 138px;
  height: 28px;
  padding: 0 8px;
  display: flex;
  align-items: center;
  border: 1px solid #3a3a3a;
  border-radius: 7px;
  font-size: 10px;
}
.quantity input {
  flex: 1;
  min-width: 0;
}
.quantity input::placeholder {
  color: #808080;
}
.stepper {
  display: flex;
  flex-direction: column;
  gap: 3px;
}
.rocket {
  width: 26px;
  height: 21px;
  margin-left: 8px;
  border-radius: 11px;
  background: #48484c;
}
.drag {
  width: 10px;
  height: 8px;
  margin-left: auto;
}
.account {
  display: flex;
  align-items: center;
  gap: 13px;
  margin-left: 26px;
}
.analytics {
  height: 23px;
  padding: 0 8px;
  gap: 5px;
  border: 1px solid #5a5a5a;
  border-radius: 12px;
}

/*Taskbar*/
.taskbar {
  height: 32px;
  display: grid;
  grid-template-columns: 1fr auto 1fr;
  align-items: center;
  background: #202020;
}
.dock {
  grid-column: 2;
  padding-left: 6px;
  display: flex;
  align-items: center;
}
.start {
  width: 16px;
  height: 16px;
  margin-right: 9px;
}
.task-search {
  width: 145px;
  height: 20px;
  margin-right: 4px;
  padding-left: 7px;
  display: flex;
  align-items: center;
  gap: 6px;
  border-radius: 10px;
  background: #f2f2f2;
  color: #202020;
  font-size: 9px;
}
.task-search input {
  flex: 1;
  min-width: 0;
}
.app {
  width: 29px;
  height: 28px;
  position: relative;
  display: flex;
  align-items: center;
  justify-content: center;
}
.app svg {
  width: 18px;
  height: 18px;
}
.current {
  border-radius: 3px;
  background: #2e2e2e;
}
.current::after,
.open::after {
  content: "";
  position: absolute;
  bottom: 0;
  width: 4px;
  height: 2px;
  border-radius: 1px;
  background: #9a9a9a;
}
.current::after {
  width: 10px;
  background: #58c8f5;
}
.badge {
  position: absolute;
  top: 2px;
  right: 1px;
  width: 13px;
  height: 11px;
  border-radius: 6px;
  background: #58b8ea;
  color: #10405c;
  font-size: 8px;
  line-height: 11px;
  text-align: center;
}
.rec {
  position: absolute;
  top: 4px;
  right: 4px;
  width: 8px;
  height: 8px;
  border-radius: 50%;
  background: #e80000;
}
.tray {
  display: flex;
  align-items: center;
  justify-content: flex-end;
  gap: 6px;
  padding-right: 12px;
  color: #fff;
  text-align: right;
  font-size: 8px;
  line-height: 10px;
}
.bell {
  width: 11px;
  height: 11px;
}
```

FILE: chart.js
```js
// side, high, body top, body bottom, low, volume (heights inside the plot)
let bars = [
  ["u", 107, 107, 111, 111, 4], ["u", 91, 102, 109, 109, 4], ["u", 81, 84, 103, 103, 5],
  ["d", 79, 84, 85, 89, 4], ["d", 83, 85, 96, 100, 6], ["d", 96, 96, 113, 113, 6],
  ["u", 81, 88, 112, 112, 13], ["d", 85, 85, 113, 113, 11], ["d", 106, 112, 119, 122, 8],
  ["u", 112, 112, 119, 126, 10], ["u", 105, 109, 113, 123, 7], ["d", 106, 110, 120, 120, 5],
  ["d", 116, 118, 128, 140, 6], ["u", 115, 119, 128, 128, 6], ["d", 114, 119, 120, 134, 6],
  ["u", 103, 116, 123, 125, 7], ["u", 105, 109, 117, 117, 7], ["u", 89, 98, 109, 109, 7],
  ["u", 89, 98, 99, 123, 15], ["u", 92, 94, 100, 111, 8], ["d", 95, 95, 107, 112, 8],
  ["u", 93, 99, 109, 109, 5], ["d", 90, 99, 109, 109, 6], ["u", 93, 97, 110, 110, 5],
  ["d", 94, 96, 103, 120, 7], ["d", 103, 103, 117, 118, 7], ["d", 117, 117, 132, 134, 7],
  ["d", 122, 132, 146, 146, 11], ["d", 140, 147, 155, 155, 9], ["d", 149, 153, 157, 161, 8],
  ["d", 151, 156, 159, 161, 7], ["d", 157, 159, 162, 174, 8], ["u", 148, 148, 161, 161, 7],
  ["d", 145, 150, 161, 161, 7], ["u", 154, 159, 162, 168, 5], ["u", 152, 155, 159, 163, 5],
  ["d", 157, 157, 170, 174, 5], ["u", 160, 168, 171, 174, 7], ["u", 166, 168, 174, 174, 4],
  ["d", 164, 167, 169, 176, 4], ["d", 167, 169, 190, 191, 6], ["d", 187, 189, 205, 205, 7],
  ["u", 196, 200, 204, 216, 9], ["u", 191, 191, 201, 216, 6], ["d", 185, 192, 193, 193, 3],
  ["u", 182, 182, 197, 197, 3], ["u", 171, 178, 184, 184, 6], ["u", 173, 177, 179, 181, 5],
  ["u", 164, 166, 177, 186, 4], ["d", 164, 167, 172, 173, 3], ["u", 154, 159, 170, 175, 5],
  ["u", 145, 145, 159, 170, 4], ["d", 145, 146, 155, 158, 3], ["u", 132, 142, 155, 159, 6],
  ["d", 139, 141, 149, 161, 6], ["d", 150, 150, 157, 161, 4], ["u", 149, 151, 156, 158, 3],
  ["u", 143, 144, 151, 157, 4], ["d", 146, 146, 161, 168, 5], ["d", 152, 159, 164, 165, 4],
  ["d", 156, 164, 166, 166, 4], ["u", 152, 163, 167, 168, 4], ["d", 158, 164, 165, 168, 4],
  ["d", 162, 165, 170, 174, 5], ["d", 170, 170, 189, 189, 5], ["d", 183, 187, 196, 198, 7],
  ["d", 182, 194, 195, 202, 8], ["d", 188, 195, 199, 199, 8], ["d", 192, 195, 203, 204, 8],
  ["d", 203, 203, 215, 216, 7], ["d", 204, 215, 228, 230, 12], ["u", 222, 225, 226, 248, 15],
  ["u", 203, 207, 224, 229, 15], ["d", 201, 207, 210, 225, 19], ["u", 189, 199, 209, 216, 15],
  ["u", 187, 192, 201, 201, 11], ["d", 188, 192, 197, 207, 10], ["d", 186, 196, 197, 203, 9],
  ["u", 188, 190, 198, 205, 12], ["u", 174, 186, 190, 197, 11], ["d", 187, 187, 197, 212, 11],
  ["u", 179, 179, 196, 199, 11], ["d", 180, 180, 196, 203, 11], ["u", 165, 167, 197, 235, 25],
  ["d", 157, 170, 333, 338, 73], ["u", 277, 281, 333, 337, 85], ["u", 222, 261, 282, 282, 81],
];

let svg = document.getElementById("candles");
let hour = 96.3;
let step = hour / 12;
let firstHour = 47;
let base = 498;
let out = "";

function rect(x, y, w, h, fill) {
  out += `<rect x="${x}" y="${y}" width="${w}" height="${h}" fill="${fill}"/>`;
}

// sessions
rect(239, 131, 378, 119, "#190a0b");
rect(624, 157, 65, 181, "#060919");

// grid
for (let i = 0; i < 12; i++) {
  rect(Math.round(firstHour + i * hour), 0, 1, base, "rgba(255,255,255,0.07)");
}
for (let i = 0; i < 18; i++) {
  rect(0, Math.round(13 + i * 22.1), "100%", 1, "rgba(255,255,255,0.05)");
}

// swept low and last price
rect(568, 248, 121, 2, "#a09fae");
out += `<line x1="0" x2="100%" y1="261" y2="261" stroke="#3a7f5c" stroke-dasharray="1 1"/>`;

bars.forEach((bar, i) => {
  let [side, high, top, bottom, low, volume] = bar;
  let x = Math.round(firstHour + (i - 6) * step);
  let up = side === "u";
  rect(x, high, 1, low - high, up ? "#2f8358" : "#a01a40");
  rect(x - 3, top, 6, Math.max(bottom - top, 1), up ? "#43a36c" : "#cb1746");
  rect(x - 4, base - volume, 8, volume, up ? "#17624c" : "#7b2139");
  rect(x + 3, base - volume, 1, volume, "rgba(0,0,0,0.35)");
});

rect(0, 403, "100%", 1, "#3a3a3a");

// news events
[[577, "#b01028"], [585, "#f2ea4a"], [649, "#f2ea4a"], [721, "#b01028"]].forEach(([x, ring]) => {
  out += `<circle cx="${x}" cy="395" r="6.500" fill="#000" stroke="${ring}" stroke-width="1.500"/>
    <circle cx="${x}" cy="395" r="4.500" fill="#f0e4e6"/>
    <path d="M${x} 392.500h4M${x - 4} 395.500h8M${x - 3} 398.500h6" stroke="#c03048"/>
    <path d="M${x} 390.500v4.500h-4.500a4.500 4.500 0 0 1 4.500-4.500z" fill="#3c5aa8"/>`;
});

svg.innerHTML = out;
```
